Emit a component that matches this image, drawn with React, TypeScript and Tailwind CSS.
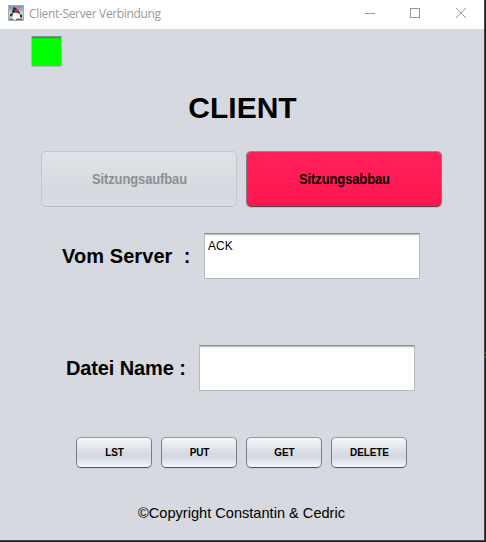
import type { ReactNode } from "react";

function DukeIcon() {
  return (
    <svg width="16" height="16" viewBox="0 0 16 16" className="shrink-0">
      <defs>
        <linearGradient id="sky" x1="0" y1="0" x2="0" y2="1">
          <stop offset="0" stopColor="#6f8ba5" />
          <stop offset="0.55" stopColor="#d0dae1" />
          <stop offset="1" stopColor="#9babb6" />
        </linearGradient>
      </defs>
      <rect x="0.5" y="0.5" width="15" height="15" fill="url(#sky)" stroke="#a3adb6" />
      <path d="M5.5 2 L8 3 L11 6 L12 9 L5 9 L4 6.5 Z" fill="#2a3138" />
      <path d="M4.5 8.5 L7 7.5 L10 8 L12 9.5 L12 13.5 L9.5 13 L8 14.5 L4.5 14.5 Z" fill="#fafafa" />
      <path d="M2 9 L4.5 8 L5 9.5 L3.5 11.5 L2 11 Z M12 9 L14 10 L14 12.5 L12 12 Z" fill="#2c333a" />
      <circle cx="8.7" cy="6" r="1.9" fill="#e4292b" />
      <path d="M2 14.5 H5 M8 14.5 H14" stroke="#59646d" />
    </svg>
  );
}

function TitleBar() {
  return (
    <header className="flex h-[29px] shrink-0 items-start justify-between bg-white">
      <div className="flex pt-[5px] pl-2">
        <DukeIcon />
        <span className="ml-[5px] text-[12px] leading-[18px] tracking-[-0.34px] text-[#999] [font-family:'Open_Sans','Noto_Sans',sans-serif]">
          Client-Server Verbindung
        </span>
      </div>
      <svg width="119" height="29" fill="none" stroke="#999" shapeRendering="crispEdges">
        <path d="M0 13.5 H10 M45.5 8.5 H54.5 V17.5 H45.5 Z" />
        <path d="M91 8 L101 18 M101 8 L91 18" shapeRendering="auto" />
      </svg>
    </header>
  );
}

function Field({ className, children }: { className: string; children?: ReactNode }) {
  return (
    <div className={`shrink-0 border border-[#b9babd] border-t-[#8d8e91] ${className}`}>
      {children}
    </div>
  );
}

function SmallButton({ label }: { label: string }) {
  return (
    <button className="h-[31px] w-[76px] rounded-[5px] border border-[#797c83] border-t-[#96989e] border-b-[#54575e] bg-[linear-gradient(#f6f7f9_0%,#e5e8ec_30%,#d5d9e1_56%,#d6dae2_68%,#f3f6fb_100%)] pl-px text-[10px] leading-[29px] font-bold tracking-[-0.1px] text-black shadow-[0_1px_0_#c5c9d1]">
      {label}
    </button>
  );
}

export default function App() {
  return (
    <div className="h-[542px] w-[486px] overflow-hidden bg-[linear-gradient(#1b1b1d_352px,#3f6046_352px,#3f6046_354px,#1b1b1d_354px,#1b1b1d_356px,#3f6046_356px,#3f6046_358px,#1b1b1d_358px)] pr-px pb-px">
      <div className="h-[541px] w-[485px] border-r border-b border-[#454649]">
        <div className="flex h-[540px] w-[484px] flex-col bg-[#d6d9e0] text-black [font-family:'Liberation_Sans',Arial,sans-serif]">
          <TitleBar />
          <Field className="mt-[7px] ml-[31px] h-[31px] w-[31px] bg-[#00ff00] shadow-[inset_0_1px_0_#00c400,inset_0_2px_0_#00eb00]" />
          <h1 className="mt-[23px] pl-px text-center text-[30px] leading-9 font-bold">CLIENT</h1>
          <div className="mt-[25px] ml-[41px] flex gap-[9px] text-[13px] font-bold">
            <button
              disabled
              className="h-[56px] w-[196px] rounded-[5px] border border-[#c3c6ca] border-b-[#b8bbc0] bg-[linear-gradient(#dfe3e7,#d9dde2_50%,#d5d8df_75%,#d9dce1)] pt-px pl-px text-[#8e8f91]"
            >
              <span className="inline-block scale-y-110 tracking-[-0.12px]">Sitzungsaufbau</span>
            </button>
            <button className="h-[56px] w-[196px] rounded-[5px] border border-[#84777e] border-t-[#a47d88] border-b-[#693e4b] bg-linear-to-b from-[#ff2059] to-[#ff164f] pt-px pl-px text-black shadow-[0_1px_0_#bdc1c8]">
              <span className="inline-block scale-y-110 tracking-[-0.12px]">Sitzungsabbau</span>
            </button>
          </div>
          <div className="mt-[26px] ml-[62px] flex items-center">
            <label className="w-[142px] text-[20px] leading-6 font-bold tracking-[0.08px] whitespace-pre">Vom Server  :</label>
            <Field className="h-[46px] w-[216px] bg-white pt-[5px] pl-[3px] text-[12px] leading-[14px] shadow-[inset_0_1px_0_#c4c4c4,inset_0_2px_0_#ececec]">
              ACK
            </Field>
          </div>
          <div className="mt-[66px] ml-[66px] flex items-center">
            <label className="w-[133px] text-[20px] leading-6 font-bold tracking-[-0.12px]">Datei Name :</label>
            <Field className="h-[46px] w-[216px] bg-white shadow-[inset_0_1px_0_#c4c4c4,inset_0_2px_0_#ececec]" />
          </div>
          <div className="mt-[46px] ml-[76px] flex gap-[9px]">
            <SmallButton label="LST" />
            <SmallButton label="PUT" />
            <SmallButton label="GET" />
            <SmallButton label="DELETE" />
          </div>
          <footer className="mt-[36px] pr-px text-center text-[14.6px] leading-[18px]">
            ©Copyright Constantin &amp; Cedric
          </footer>
        </div>
      </div>
    </div>
  );
}
